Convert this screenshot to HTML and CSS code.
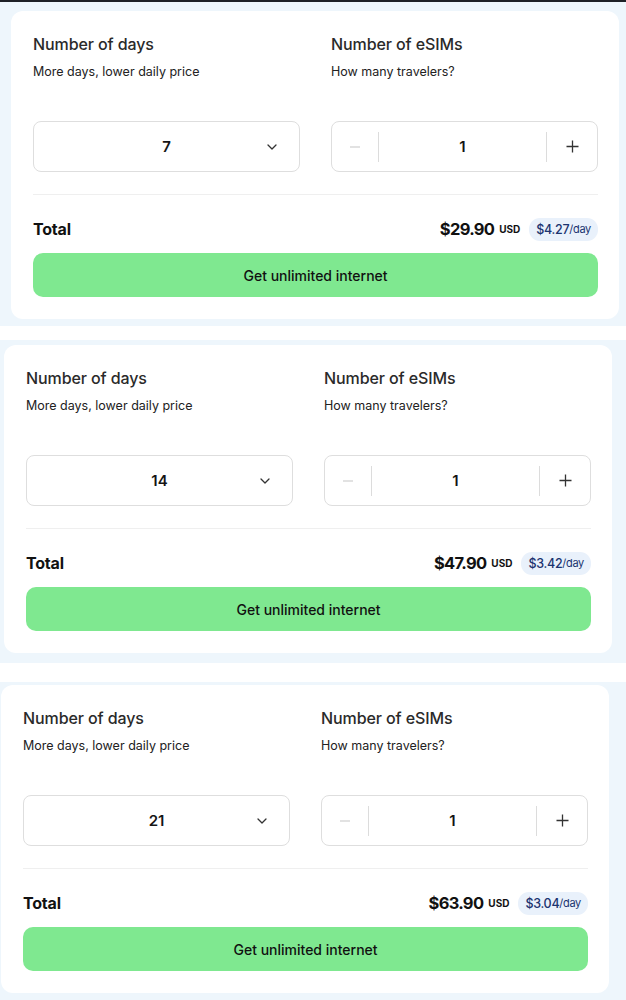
FILE: index.html
```html
<!DOCTYPE html>
<html lang="en">
<head>
<meta charset="utf-8">
<title>eSIM plans</title>
<link rel="stylesheet" href="styles.css">
</head>
<body>
<div class="topbar"></div>

<section class="shot shot-1">
  <div class="card">
    <div class="fields">
      <div class="field">
        <div class="label">
          <h3>Number of days</h3>
          <p>More days, lower daily price</p>
        </div>
        <div class="select">
          <span class="value">7</span>
          <svg class="chev" width="10" height="6" viewBox="0 0 10 6"><path d="M1 1l4 4 4-4" fill="none" stroke="#333" stroke-width="1.3" stroke-linecap="round" stroke-linejoin="round"/></svg>
        </div>
      </div>
      <div class="field">
        <div class="label">
          <h3>Number of eSIMs</h3>
          <p>How many travelers?</p>
        </div>
        <div class="stepper">
          <span class="btn minus"><svg width="12" height="12" viewBox="0 0 12 12"><path d="M1 6h10" stroke="#d2d2d2" stroke-width="1.3"/></svg></span>
          <span class="count">1</span>
          <span class="btn plus"><svg width="13" height="13" viewBox="0 0 13 13"><path d="M0.5 6.5h12M6.5 0.5v12" stroke="#333" stroke-width="1.3"/></svg></span>
        </div>
      </div>
    </div>
    <div class="divider"></div>
    <div class="total">
      <span class="total-label">Total</span>
      <span class="price"><b>$29.90</b><small>USD</small><span class="badge">$4.27<em>/day</em></span></span>
    </div>
    <button class="cta">Get unlimited internet</button>
  </div>
</section>

<section class="shot shot-2">
  <div class="card">
    <div class="fields">
      <div class="field">
        <div class="label">
          <h3>Number of days</h3>
          <p>More days, lower daily price</p>
        </div>
        <div class="select">
          <span class="value">14</span>
          <svg class="chev" width="10" height="6" viewBox="0 0 10 6"><path d="M1 1l4 4 4-4" fill="none" stroke="#333" stroke-width="1.3" stroke-linecap="round" stroke-linejoin="round"/></svg>
        </div>
      </div>
      <div class="field">
        <div class="label">
          <h3>Number of eSIMs</h3>
          <p>How many travelers?</p>
        </div>
        <div class="stepper">
          <span class="btn minus"><svg width="12" height="12" viewBox="0 0 12 12"><path d="M1 6h10" stroke="#d2d2d2" stroke-width="1.3"/></svg></span>
          <span class="count">1</span>
          <span class="btn plus"><svg width="13" height="13" viewBox="0 0 13 13"><path d="M0.5 6.5h12M6.5 0.5v12" stroke="#333" stroke-width="1.3"/></svg></span>
        </div>
      </div>
    </div>
    <div class="divider"></div>
    <div class="total">
      <span class="total-label">Total</span>
      <span class="price"><b>$47.90</b><small>USD</small><span class="badge">$3.42<em>/day</em></span></span>
    </div>
    <button class="cta">Get unlimited internet</button>
  </div>
</section>

<section class="shot shot-3">
  <div class="card">
    <div class="fields">
      <div class="field">
        <div class="label">
          <h3>Number of days</h3>
          <p>More days, lower daily price</p>
        </div>
        <div class="select">
          <span class="value">21</span>
          <svg class="chev" width="10" height="6" viewBox="0 0 10 6"><path d="M1 1l4 4 4-4" fill="none" stroke="#333" stroke-width="1.3" stroke-linecap="round" stroke-linejoin="round"/></svg>
        </div>
      </div>
      <div class="field">
        <div class="label">
          <h3>Number of eSIMs</h3>
          <p>How many travelers?</p>
        </div>
        <div class="stepper">
          <span class="btn minus"><svg width="12" height="12" viewBox="0 0 12 12"><path d="M1 6h10" stroke="#d2d2d2" stroke-width="1.3"/></svg></span>
          <span class="count">1</span>
          <span class="btn plus"><svg width="13" height="13" viewBox="0 0 13 13"><path d="M0.5 6.5h12M6.5 0.5v12" stroke="#333" stroke-width="1.3"/></svg></span>
        </div>
      </div>
    </div>
    <div class="divider"></div>
    <div class="total">
      <span class="total-label">Total</span>
      <span class="price"><b>$63.90</b><small>USD</small><span class="badge">$3.04<em>/day</em></span></span>
    </div>
    <button class="cta">Get unlimited internet</button>
  </div>
</section>
</body>
</html>
```

FILE: styles.css
```css
* { box-sizing: border-box; }

body {
  margin: 0;
  background: #ffffff;
  font-family: Inter, "Liberation Sans", sans-serif;
  color: #1f1f1f;
  width: 626px;
}

.topbar {
  height: 2px;
  background: #1e2127;
}

.shot {
  background: #eef6fc;
}
.shot-1 { padding: 9px 0 7px 11px; }
.shot-2 { margin-top: 14px; padding: 5px 0 10px 4px; }
.shot-3 { margin-top: 19px; padding: 3px 0 7px 1px; }

.card {
  width: 608px;
  background: #ffffff;
  border-radius: 12px;
  padding: 22px 21px 22px 22px;
}

.fields {
  display: grid;
  grid-template-columns: 267px 267px;
  column-gap: 31px;
}

.label {
  height: 88px;
}

.label h3 {
  margin: 0;
  font-size: 16px;
  line-height: 22px;
  font-weight: 500;
  color: #2a2a2a;
  letter-spacing: -0.1px;
}

.label p {
  margin: 8px 0 0;
  font-size: 12.5px;
  line-height: 18px;
  color: #222;
}

.select {
  height: 51px;
  border: 1px solid #dedede;
  border-radius: 8px;
  display: flex;
  align-items: center;
  justify-content: center;
  position: relative;
}

.select .value,
.stepper .count {
  font-size: 15px;
  font-weight: 600;
  color: #151515;
}

.chev {
  position: absolute;
  right: 22px;
  top: 22px;
}

.stepper {
  height: 51px;
  border: 1px solid #dedede;
  border-radius: 8px;
  display: grid;
  grid-template-columns: 47px 1fr 51px;
  align-items: center;
}

.stepper .btn {
  display: flex;
  align-items: center;
  justify-content: center;
  height: 30px;
}
.stepper .minus { border-right: 1px solid #dcdcdc; }
.stepper .plus { border-left: 1px solid #dcdcdc; }
.stepper .count { text-align: center; }

.divider {
  height: 1px;
  background: #efefef;
  margin-top: 22px;
}

.total {
  margin-top: 22px;
  height: 24px;
  display: flex;
  align-items: center;
  justify-content: space-between;
}

.total-label {
  font-size: 16px;
  font-weight: 700;
  color: #111;
  letter-spacing: -0.2px;
}

.price {
  display: flex;
  align-items: center;
}

.price b {
  font-size: 16.5px;
  font-weight: 700;
  color: #111;
  letter-spacing: -0.7px;
}

.price small {
  font-size: 10px;
  font-weight: 700;
  margin-left: 5px;
  color: #111;
}

.badge {
  margin-left: 9px;
  height: 23px;
  padding: 0 7px;
  border-radius: 11px;
  background: #e9f1fb;
  color: #1b3470;
  font-size: 12.5px;
  font-weight: 500;
  display: flex;
  align-items: center;
  letter-spacing: -0.3px;
}
.badge em {
  font-style: normal;
  font-size: 11px;
  font-weight: 400;
}

.cta {
  display: block;
  width: 100%;
  margin-top: 12px;
  height: 44px;
  border: 0;
  border-radius: 10px;
  background: #7fe890;
  font-family: Inter, "Liberation Sans", sans-serif;
  font-size: 14px;
  font-weight: 500;
  color: #111;
}
```
